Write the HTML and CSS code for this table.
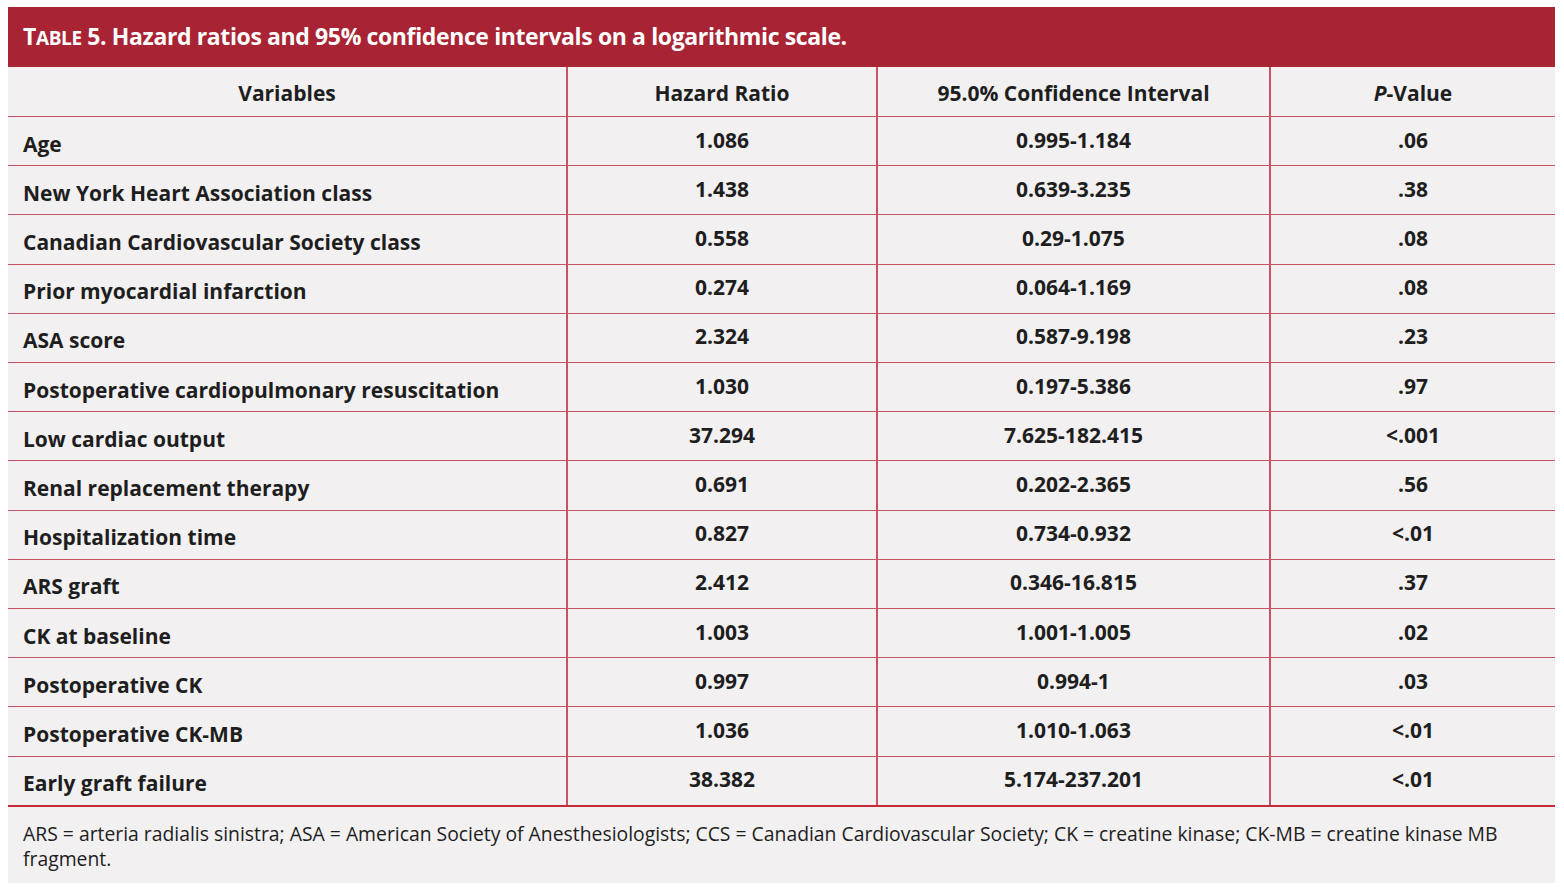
FILE: index.html
```html
<!DOCTYPE html>
<html>
<head>
<meta charset="utf-8">
<link rel="stylesheet" href="styles.css">
</head>
<body>
<div class="box">
  <div class="title">T<span class="sc">ABLE</span> 5. Hazard ratios and 95% confidence intervals on a logarithmic scale.</div>
  <table class="tbl">
    <colgroup>
      <col class="c1"><col class="c2"><col class="c3"><col class="c4">
    </colgroup>
    <thead>
      <tr><th>Variables</th><th>Hazard Ratio</th><th>95.0% Confidence Interval</th><th><i>P</i>-Value</th></tr>
    </thead>
    <tbody>
      <tr><td>Age</td><td>1.086</td><td>0.995-1.184</td><td>.06</td></tr>
      <tr><td>New York Heart Association class</td><td>1.438</td><td>0.639-3.235</td><td>.38</td></tr>
      <tr><td>Canadian Cardiovascular Society class</td><td>0.558</td><td>0.29-1.075</td><td>.08</td></tr>
      <tr><td>Prior myocardial infarction</td><td>0.274</td><td>0.064-1.169</td><td>.08</td></tr>
      <tr><td>ASA score</td><td>2.324</td><td>0.587-9.198</td><td>.23</td></tr>
      <tr><td>Postoperative cardiopulmonary resuscitation</td><td>1.030</td><td>0.197-5.386</td><td>.97</td></tr>
      <tr><td>Low cardiac output</td><td>37.294</td><td>7.625-182.415</td><td>&lt;.001</td></tr>
      <tr><td>Renal replacement therapy</td><td>0.691</td><td>0.202-2.365</td><td>.56</td></tr>
      <tr><td>Hospitalization time</td><td>0.827</td><td>0.734-0.932</td><td>&lt;.01</td></tr>
      <tr><td>ARS graft</td><td>2.412</td><td>0.346-16.815</td><td>.37</td></tr>
      <tr><td>CK at baseline</td><td>1.003</td><td>1.001-1.005</td><td>.02</td></tr>
      <tr><td>Postoperative CK</td><td>0.997</td><td>0.994-1</td><td>.03</td></tr>
      <tr><td>Postoperative CK-MB</td><td>1.036</td><td>1.010-1.063</td><td>&lt;.01</td></tr>
      <tr class="last"><td>Early graft failure</td><td>38.382</td><td>5.174-237.201</td><td>&lt;.01</td></tr>
    </tbody>
  </table>
  <div class="note">ARS = arteria radialis sinistra; ASA = American Society of Anesthesiologists; CCS = Canadian Cardiovascular Society; CK = creatine kinase; CK-MB = creatine kinase MB fragment.</div>
</div>
</body>
</html>
```
FILE: styles.css
```css
html, body {
  margin: 0;
  padding: 0;
  background: #ffffff;
}
body {
  padding: 7px 9px 0 8px;
  font-family: "Open Sans", "Noto Sans", sans-serif;
  color: #1e1e1e;
}
.box {
  width: 1547px;
  background: #f2f0f1;
}
.title {
  background: #a82434;
  color: #ffffff;
  height: 60px;
  box-sizing: border-box;
  padding: 14px 0 0 15px;
  font-size: 23px;
  font-weight: 700;
  line-height: 30px;
  letter-spacing: -0.38px;
}
.sc {
  font-size: 19px;
}
.tbl {
  width: 100%;
  border-collapse: collapse;
  table-layout: fixed;
}
.c1 { width: 559px; }
.c2 { width: 310px; }
.c3 { width: 393px; }
.c4 { width: 285px; }
.tbl th, .tbl td {
  font-size: 21px;
  font-weight: 700;
  text-align: center;
  padding: 0;
  border-bottom: 1px solid #c65462;
  border-left: 2px solid #c65462;
  line-height: 24px;
  vertical-align: middle;
}
.tbl th {
  height: 46px;
  padding-top: 3px;
}
.tbl th:first-child, .tbl td:first-child {
  border-left: none;
}
.tbl td {
  height: 45.21px;
  padding-bottom: 3px;
}
.tbl td:first-child {
  text-align: left;
  height: 43.21px;
  padding: 5px 0 0 15px;
}
.tbl tr.last td {
  border-bottom: 2px solid #c42a3a;
}
.note {
  font-size: 19.35px;
  line-height: 25px;
  padding: 14px 40px 12px 15px;
  color: #1e1e1e;
}
```
